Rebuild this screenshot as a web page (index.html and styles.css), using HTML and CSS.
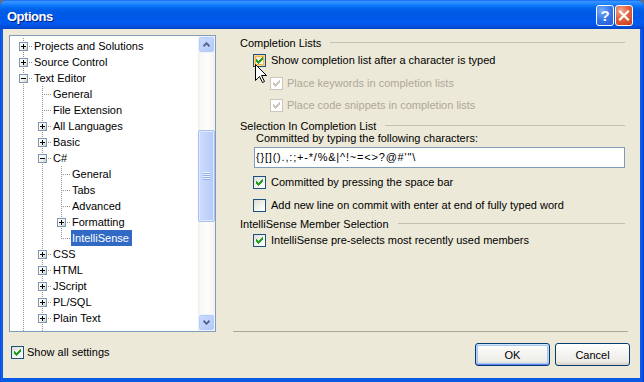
FILE: index.html
```html
<!DOCTYPE html>
<html>
<head>
<meta charset="utf-8">
<title>Options</title>
<link rel="stylesheet" href="styles.css">
</head>
<body>
<svg class="defs" width="0" height="0" aria-hidden="true">
  <defs>
    <linearGradient id="expg" x1="0" y1="0" x2="1" y2="1">
      <stop offset="0" stop-color="#ffffff"/>
      <stop offset="0.55" stop-color="#F3F2EE"/>
      <stop offset="1" stop-color="#C8C5B6"/>
    </linearGradient>
    <symbol id="plus" viewBox="0 0 9 9">
      <rect x="0.5" y="0.5" width="8" height="8" fill="url(#expg)" stroke="#7898B5"/>
      <path d="M2 4.5h5M4.5 2v5" stroke="#000" shape-rendering="crispEdges"/>
    </symbol>
    <symbol id="minus" viewBox="0 0 9 9">
      <rect x="0.5" y="0.5" width="8" height="8" fill="url(#expg)" stroke="#7898B5"/>
      <path d="M2 4.5h5" stroke="#000" shape-rendering="crispEdges"/>
    </symbol>
    <symbol id="check" viewBox="1 1 11 11">
      <path d="M9 3h1v1h-1zM8 4h2v1h-2zM3 5h1v1h-1zM7 5h3v1h-3zM3 6h2v1h-2zM6 6h3v1h-3zM3 7h5v1h-5zM4 8h3v1h-3zM5 9h1v1h-1z"/>
    </symbol>
  </defs>
</svg>

<div class="window">
  <div class="titlebar">
    <span class="title">Options</span>
    <div class="caption-btns">
      <div class="cbtn help">?</div>
      <div class="cbtn close">
        <svg width="16" height="19" viewBox="0 0 16 19"><path d="M4 5.5L12 13.5M12 5.5L4 13.5" stroke="#fff" stroke-width="2.2" stroke-linecap="square"/></svg>
      </div>
    </div>
  </div>

  <div class="client">
    <div class="main">
      <div class="tree">
        <div class="items">
          <div class="row"><span class="g tee"><svg class="exp"><use href="#plus"/></svg></span><span class="lbl">Projects and Solutions</span></div>
          <div class="row"><span class="g tee"><svg class="exp"><use href="#plus"/></svg></span><span class="lbl">Source Control</span></div>
          <div class="row"><span class="g tee"><svg class="exp"><use href="#minus"/></svg></span><span class="lbl">Text Editor</span></div>
          <div class="row"><span class="g pipe"></span><span class="g tee"></span><span class="lbl">General</span></div>
          <div class="row"><span class="g pipe"></span><span class="g tee"></span><span class="lbl">File Extension</span></div>
          <div class="row"><span class="g pipe"></span><span class="g tee"><svg class="exp"><use href="#plus"/></svg></span><span class="lbl">All Languages</span></div>
          <div class="row"><span class="g pipe"></span><span class="g tee"><svg class="exp"><use href="#plus"/></svg></span><span class="lbl">Basic</span></div>
          <div class="row"><span class="g pipe"></span><span class="g tee"><svg class="exp"><use href="#minus"/></svg></span><span class="lbl">C#</span></div>
          <div class="row"><span class="g pipe"></span><span class="g pipe"></span><span class="g tee"></span><span class="lbl">General</span></div>
          <div class="row"><span class="g pipe"></span><span class="g pipe"></span><span class="g tee"></span><span class="lbl">Tabs</span></div>
          <div class="row"><span class="g pipe"></span><span class="g pipe"></span><span class="g tee"></span><span class="lbl">Advanced</span></div>
          <div class="row"><span class="g pipe"></span><span class="g pipe"></span><span class="g tee"><svg class="exp"><use href="#plus"/></svg></span><span class="lbl">Formatting</span></div>
          <div class="row"><span class="g pipe"></span><span class="g pipe"></span><span class="g elbow"></span><span class="lbl selected">IntelliSense</span></div>
          <div class="row"><span class="g pipe"></span><span class="g tee"><svg class="exp"><use href="#plus"/></svg></span><span class="lbl">CSS</span></div>
          <div class="row"><span class="g pipe"></span><span class="g tee"><svg class="exp"><use href="#plus"/></svg></span><span class="lbl">HTML</span></div>
          <div class="row"><span class="g pipe"></span><span class="g tee"><svg class="exp"><use href="#plus"/></svg></span><span class="lbl">JScript</span></div>
          <div class="row"><span class="g pipe"></span><span class="g tee"><svg class="exp"><use href="#plus"/></svg></span><span class="lbl">PL/SQL</span></div>
          <div class="row"><span class="g pipe"></span><span class="g tee"><svg class="exp"><use href="#plus"/></svg></span><span class="lbl">Plain Text</span></div>
          <div class="row"><span class="g pipe"></span><span class="g pipe"></span></div>
        </div>
        <div class="vscroll">
          <div class="sb-btn"><svg width="7" height="5" viewBox="0 0 7 5"><polyline points="0.5,4.3 3.5,1.2 6.5,4.3" fill="none" stroke="#4D6185" stroke-width="1.8"/></svg></div>
          <div class="sb-track"><div class="thumb"><div class="grip"></div></div></div>
          <div class="sb-btn"><svg width="7" height="5" viewBox="0 0 7 5"><polyline points="0.5,0.7 3.5,3.8 6.5,0.7" fill="none" stroke="#4D6185" stroke-width="1.8"/></svg></div>
        </div>
      </div>

      <div class="panel">
        <div class="head">Completion Lists</div>
        <div class="opt m4"><span class="cb hover"><svg class="ck"><use href="#check"/></svg></span><span>Show completion list after a character is typed</span></div>
        <div class="opt sub m10"><span class="cb disabled"><svg class="ck"><use href="#check"/></svg></span><span>Place keywords in completion lists</span></div>
        <div class="opt sub m9"><span class="cb disabled"><svg class="ck"><use href="#check"/></svg></span><span>Place code snippets in completion lists</span></div>
        <div class="head m8">Selection In Completion List</div>
        <div class="field-label">Committed by typing the following characters:</div>
        <div class="textbox">{}[]().,:;+-*/%&amp;|^!~=&lt;&gt;?@#'"\</div>
        <div class="opt m8"><span class="cb"><svg class="ck"><use href="#check"/></svg></span><span>Committed by pressing the space bar</span></div>
        <div class="opt m10"><span class="cb"></span><span>Add new line on commit with enter at end of fully typed word</span></div>
        <div class="head m6">IntelliSense Member Selection</div>
        <div class="opt m3"><span class="cb"><svg class="ck"><use href="#check"/></svg></span><span>IntelliSense pre-selects most recently used members</span></div>
      </div>
    </div>

    <div class="footer">
      <div class="show-all"><span class="cb"><svg class="ck"><use href="#check"/></svg></span><span>Show all settings</span></div>
      <div class="buttons">
        <button class="btn default">OK</button>
        <button class="btn">Cancel</button>
      </div>
    </div>
  </div>

  <svg class="cursor" width="12" height="19" viewBox="0 0 12 19"><path d="M0.5 0.5L0.5 16.5L4.5 12.5L7.5 18.5L9.5 17.5L6.5 11.5L11.5 11.5Z" fill="#fff" stroke="#000" stroke-width="1" stroke-linejoin="miter"/></svg>
</div>
</body>
</html>
```

FILE: styles.css
```css
* { box-sizing: border-box; }
html, body { margin: 0; padding: 0; }
body {
  width: 644px;
  height: 382px;
  overflow: hidden;
  background: #5F6E86;
  font-family: "Liberation Sans", Arial, sans-serif;
  font-size: 11px;
  color: #000;
}
.defs { position: absolute; width: 0; height: 0; overflow: hidden; }

.window {
  position: relative;
  width: 644px;
  height: 382px;
  display: flex;
  flex-direction: column;
  border-radius: 7px 7px 0 0;
  background: linear-gradient(to right, #0831D9 0, #166AEE 1px, #0A5AE6 2px, #0A5AE6 calc(100% - 2px), #0831D9 100%);
}

/* Title bar */
.titlebar {
  height: 29px;
  flex: none;
  display: flex;
  align-items: flex-start;
  padding: 0 11px 0 7px;
  border-radius: 7px 7px 0 0;
  background: linear-gradient(to bottom,
    #0058EE 0, #3A93FF 1px, #2A8AFF 3px, #127DFF 5px, #056EF5 7px,
    #0062EB 9px, #005BE6 12px, #0058EA 18px, #005CF2 22px, #0055E6 25px, #004AD2 28px, #0040C2 29px);
}
.title {
  flex: 1;
  margin-top: 9px;
  color: #fff;
  font: bold 13px/15px "Liberation Sans", Arial, sans-serif;
  letter-spacing: -0.5px;
  text-shadow: 1px 1px 0 #0A1883;
}
.caption-btns {
  display: flex;
  gap: 1px;
  margin-top: 5px;
}
.cbtn {
  width: 18px;
  height: 21px;
  border: 1px solid #fff;
  border-radius: 3px;
  display: flex;
  align-items: center;
  justify-content: center;
}
.help {
  background: radial-gradient(circle at 30% 25%, #78AEFB 0%, #3C7BEB 45%, #2158D8 100%);
  color: #fff;
  font: bold 15px/19px "Liberation Sans", Arial, sans-serif;
}
.close {
  background: radial-gradient(circle at 30% 25%, #F2A88F 0%, #E2613D 45%, #C43F1A 100%);
}
.close svg { display: block; }

/* Client area */
.client {
  flex: 1;
  margin: 0 4px 4px 3px;
  background: #ECE9D8;
  display: flex;
  flex-direction: column;
}
.main {
  display: flex;
  padding: 6px 0 0 6px;
}

/* Tree */
.tree {
  width: 207px;
  height: 297px;
  flex: none;
  border: 1px solid #7F9DB9;
  background: #fff;
  display: flex;
  overflow: hidden;
}
.items {
  flex: 1;
  min-width: 0;
  padding: 2px 0 0 4px;
  overflow: hidden;
}
.row {
  display: flex;
  height: 16px;
}
.g {
  width: 19px;
  height: 16px;
  flex: none;
  display: flex;
  align-items: flex-start;
  padding: 4px 0 0 5px;
  background-repeat: no-repeat;
}
.pipe {
  background-image: repeating-linear-gradient(to bottom, #959595 0 1px, transparent 1px 2px);
  background-size: 1px 16px;
  background-position: 9px 0;
}
.tee, .elbow {
  background-image:
    repeating-linear-gradient(to bottom, #959595 0 1px, transparent 1px 2px),
    repeating-linear-gradient(to right, #959595 0 1px, transparent 1px 2px);
  background-size: 1px 16px, 10px 1px;
  background-position: 9px 0, 9px 8px;
}
.elbow { background-size: 1px 9px, 10px 1px; }
.exp { width: 9px; height: 9px; display: block; }
.lbl {
  padding: 0 3px 0 1px;
  line-height: 16px;
  white-space: nowrap;
}
.lbl.selected {
  background: #316AC5;
  color: #fff;
}

/* Scrollbar */
.vscroll {
  width: 17px;
  flex: none;
  display: flex;
  flex-direction: column;
  background: linear-gradient(to right, #EEEDE5 0, #F9F9F6 3px, #FDFDFB 10px, #F3F2EC 100%);
}
.sb-btn {
  height: 17px;
  flex: none;
  border: 1px solid #EEF3FE;
  border-radius: 3px;
  background: linear-gradient(135deg, #CCDBFD 0%, #C0D2FB 50%, #B2C7F7 100%);
  box-shadow: inset 0 0 0 1px #B7CBF8;
  display: flex;
  align-items: center;
  justify-content: center;
}
.sb-btn svg { display: block; }
.sb-track {
  flex: 1;
  padding-top: 77px;
}
.thumb {
  height: 92px;
  border: 1px solid #A9BEF2;
  border-radius: 2px;
  background: linear-gradient(to right, #CDDBFD 0%, #C2D3FB 50%, #B5C9F8 100%);
  box-shadow: inset 0 0 0 1px #E1E9FE;
  display: flex;
  align-items: center;
  justify-content: center;
}
.grip {
  width: 7px;
  height: 8px;
  background: repeating-linear-gradient(to bottom, #EEF4FE 0 1px, #8FAEF0 1px 2px);
}

/* Right panel */
.panel {
  width: 395px;
  height: 297px;
  flex: none;
  margin-left: 17px;
  border-bottom: 1px solid #ACA899;
  padding: 2px 3px 0 7px;
}
.head {
  display: flex;
  gap: 9px;
  height: 13px;
  line-height: 13px;
  white-space: nowrap;
}
.head::after {
  content: "";
  flex: 1;
  height: 1px;
  margin-top: 5px;
  background: #C4C1B2;
}
.opt {
  display: flex;
  gap: 5px;
  height: 13px;
  line-height: 13px;
  margin-left: 13px;
  white-space: nowrap;
}
.opt.sub {
  margin-left: 30px;
  gap: 4px;
  color: #ACA899;
}
.m3 { margin-top: 3px; }
.m4 { margin-top: 4px; }
.m6 { margin-top: 6px; }
.m8 { margin-top: 8px; }
.m9 { margin-top: 9px; }
.m10 { margin-top: 10px; }

.cb {
  width: 13px;
  height: 13px;
  flex: none;
  display: block;
  border: 1px solid #1C5180;
  background: linear-gradient(135deg, #DCDBD4 0%, #EEEDE8 40%, #FBFBF9 80%, #FFFFFF 100%);
}
.cb .ck {
  display: block;
  width: 11px;
  height: 11px;
  fill: #21A121;
  shape-rendering: crispEdges;
}
.cb.hover {
  box-shadow: inset 0 0 0 1px #FCD58A, inset 0 0 0 2px #F4B443;
}
.cb.disabled {
  border-color: #CAC8BB;
  background: #fff;
}
.cb.disabled .ck { fill: #CAC8BB; }

.field-label {
  margin-top: -1px;
  margin-left: 16px;
  height: 13px;
  line-height: 13px;
  white-space: nowrap;
}
.textbox {
  margin-top: 2px;
  margin-left: 14px;
  width: 371px;
  height: 21px;
  border: 1px solid #7F9DB9;
  background: #fff;
  padding-left: 1px;
  line-height: 19px;
  letter-spacing: 0.8px;
  white-space: nowrap;
}

/* Footer */
.footer {
  display: flex;
  justify-content: space-between;
  padding: 0 10px 0 8px;
}
.show-all {
  margin-top: 14px;
  display: flex;
  gap: 3px;
  height: 13px;
  line-height: 13px;
  white-space: nowrap;
}
.buttons {
  display: flex;
  gap: 5px;
  margin-top: 11px;
}
.btn {
  width: 75px;
  height: 23px;
  padding: 0;
  border: 1px solid #003C74;
  border-radius: 3px;
  background: linear-gradient(to bottom, #FFFFFF 0%, #F6F6F3 35%, #EEEDE8 80%, #D8D3C8 100%);
  font: 11px "Liberation Sans", Arial, sans-serif;
  color: #000;
}
.btn.default {
  box-shadow: inset 0 1px 0 #CEE7FF, inset 0 -1px 0 #6982EE, inset 1px 0 0 #B8D2F8, inset -1px 0 0 #B8D2F8, inset 0 0 0 2px #A8C6F2;
}

/* Mouse pointer overlay */
.cursor {
  position: absolute;
  left: 255px;
  top: 64px;
  display: block;
}
```
